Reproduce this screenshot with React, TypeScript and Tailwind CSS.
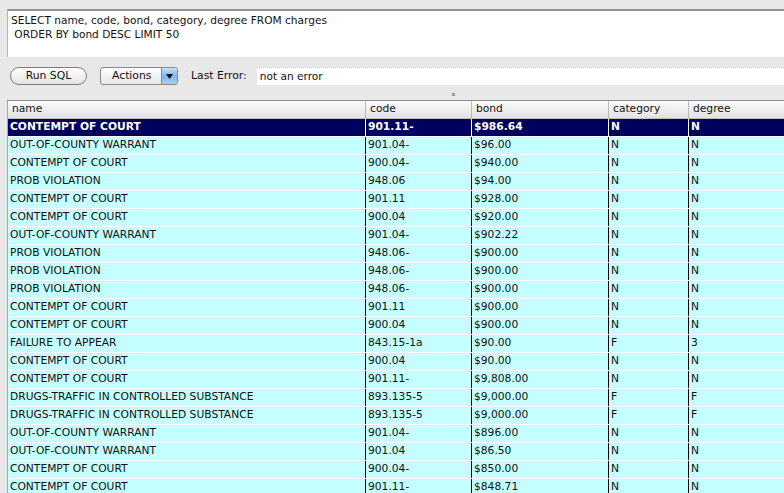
import React from "react";

type Row = [string, string, string, string, string];

const rows: Row[] = [
    ["CONTEMPT OF COURT", "901.11-", "$986.64", "N", "N"],
    ["OUT-OF-COUNTY WARRANT", "901.04-", "$96.00", "N", "N"],
    ["CONTEMPT OF COURT", "900.04-", "$940.00", "N", "N"],
    ["PROB VIOLATION", "948.06", "$94.00", "N", "N"],
    ["CONTEMPT OF COURT", "901.11", "$928.00", "N", "N"],
    ["CONTEMPT OF COURT", "900.04", "$920.00", "N", "N"],
    ["OUT-OF-COUNTY WARRANT", "901.04-", "$902.22", "N", "N"],
    ["PROB VIOLATION", "948.06-", "$900.00", "N", "N"],
    ["PROB VIOLATION", "948.06-", "$900.00", "N", "N"],
    ["PROB VIOLATION", "948.06-", "$900.00", "N", "N"],
    ["CONTEMPT OF COURT", "901.11", "$900.00", "N", "N"],
    ["CONTEMPT OF COURT", "900.04", "$900.00", "N", "N"],
    ["FAILURE TO APPEAR", "843.15-1a", "$90.00", "F", "3"],
    ["CONTEMPT OF COURT", "900.04", "$90.00", "N", "N"],
    ["CONTEMPT OF COURT", "901.11-", "$9,808.00", "N", "N"],
    ["DRUGS-TRAFFIC IN CONTROLLED SUBSTANCE", "893.135-5", "$9,000.00", "F", "F"],
    ["DRUGS-TRAFFIC IN CONTROLLED SUBSTANCE", "893.135-5", "$9,000.00", "F", "F"],
    ["OUT-OF-COUNTY WARRANT", "901.04-", "$896.00", "N", "N"],
    ["OUT-OF-COUNTY WARRANT", "901.04", "$86.50", "N", "N"],
    ["CONTEMPT OF COURT", "900.04-", "$850.00", "N", "N"],
    ["CONTEMPT OF COURT", "901.11-", "$848.71", "N", "N"],
];

const headers = ["name", "code", "bond", "category", "degree"];
// column widths in px, last one fills the rest
const widths = ["w-[357px]", "w-[106px]", "w-[137px]", "w-[80px]", "flex-1"];

const App = () => {
    return (
        <div className="w-[784px] h-[493px] overflow-hidden bg-[#e8e8e8] flex flex-col text-[#111] font-['DejaVu_Sans',sans-serif]">
            {/* sql editor */}
            <div className="mt-[9px] ml-[7px] h-[48px] shrink-0 bg-white border-t-2 border-l border-t-[#8f8f8f] border-l-[#b5b5b5] pl-[3px] pt-[2px] text-[10.6px] leading-[14px] whitespace-pre">
                <div>SELECT name, code, bond, category, degree FROM charges</div>
                <div> ORDER BY bond DESC LIMIT 50</div>
            </div>

            {/* toolbar */}
            <div className="h-[43px] shrink-0 flex items-start pt-[10px] text-[10.8px]">
                <button className="ml-[10px] w-[77px] h-[18px] rounded-full border border-[#7d7d7d] bg-gradient-to-b from-white to-[#e4e4e4] flex items-center justify-center">
                    Run SQL
                </button>
                <div className="ml-[13px] w-[78px] h-[18px] rounded-[3px] border border-[#8a8a8a] flex overflow-hidden bg-gradient-to-b from-white to-[#e6e6e6]">
                    <span className="flex-1 pl-[11px] flex items-center pt-[1px]">Actions</span>
                    <span className="w-[16px] border-l border-[#6a8fb5] bg-gradient-to-b from-[#c6e1f8] via-[#7db5e8] to-[#a6d1f5] flex items-center justify-center">
                        <svg width="7" height="5" viewBox="0 0 7 5"><path d="M0 0h7L3.5 5z" fill="#111" /></svg>
                    </span>
                </div>
                <span className="ml-[13px] h-[18px] flex items-center">Last Error:</span>
                <div className="ml-[10px] flex-1 h-[18px] bg-white border-t border-dotted border-[#c8c8c8] pl-[3px] flex items-center text-[10.6px]">
                    not an error
                </div>
            </div>

            {/* splitter handle */}
            <div className="relative h-0">
                <div className="absolute left-[452px] top-[-7px] w-[3px] h-[3px] bg-[#9a9a9a]" />
            </div>

            {/* results table */}
            <div className="ml-[7px] flex-1 border-t border-l border-t-[#8c8c8c] border-l-[#a8a8a8] bg-white flex flex-col text-[10.7px]">
                <div className="h-[18px] shrink-0 flex bg-gradient-to-b from-[#fbfbfb] to-[#e2e2e2] border-b border-[#bdbdbd]">
                    {headers.map((h, i) => (
                        <div key={h} className={`${widths[i]} shrink-0 h-full flex items-center pl-[4px] ${i > 0 ? "border-l border-[#b9b9b9]" : ""}`}>
                            {h}
                        </div>
                    ))}
                </div>
                {rows.map((r, ri) => {
                    const sel = ri === 0;
                    return (
                        <div key={ri} className={`h-[18px] shrink-0 flex border-b border-white ${sel ? "bg-[#00005f] text-white font-bold" : "bg-[#c6ffff]"}`}>
                            {r.map((c, ci) => (
                                <div key={ci} className={`${widths[ci]} shrink-0 h-full flex items-center pl-[2px] whitespace-nowrap ${ci > 0 ? (sel ? "border-l border-white" : "border-l border-black") : ""}`}>
                                    {c}
                                </div>
                            ))}
                        </div>
                    );
                })}
            </div>
        </div>
    );
};

export default App;
